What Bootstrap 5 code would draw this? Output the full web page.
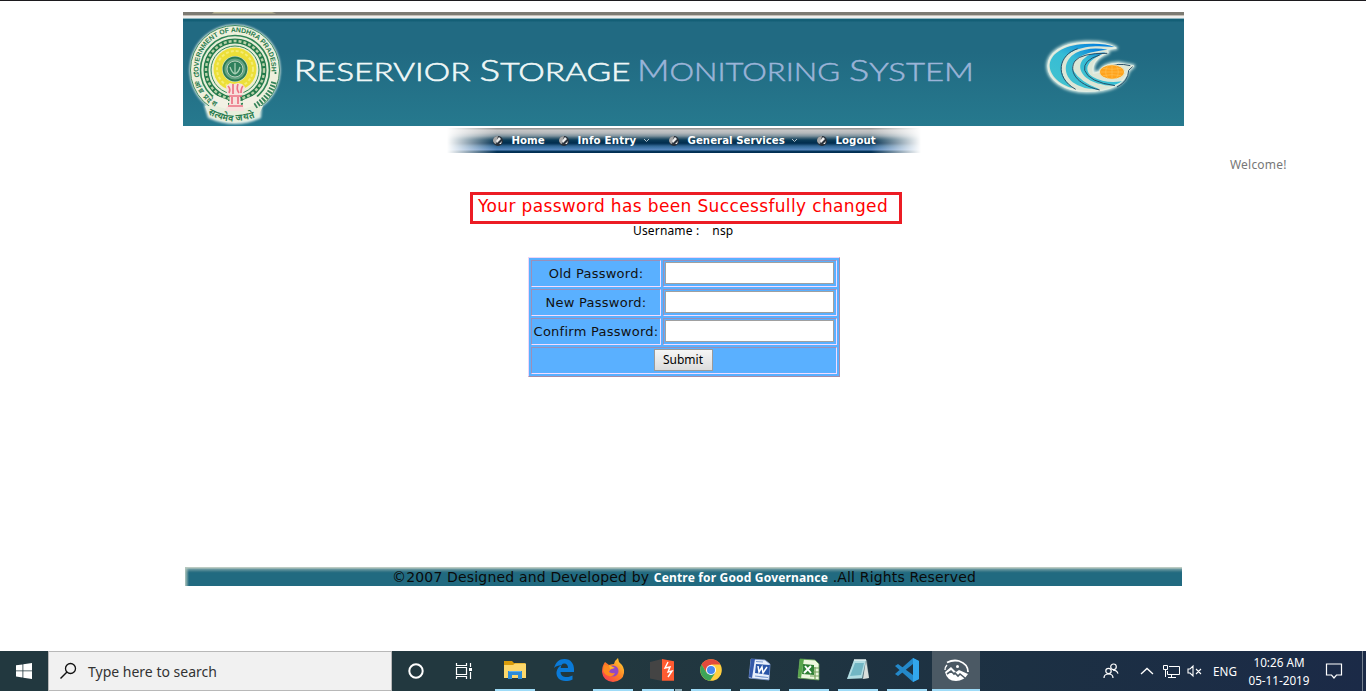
<!DOCTYPE html>
<html lang="en">
<head>
<meta charset="utf-8">
<title>Reservior Storage Monitoring System</title>
<link href="https://cdn.jsdelivr.net/npm/bootstrap@5.3.0/dist/css/bootstrap.min.css" rel="stylesheet">
<script src="https://cdn.jsdelivr.net/npm/bootstrap@5.3.0/dist/js/bootstrap.bundle.min.js" defer></script>
<style>
body{height:691px;overflow:hidden;background:#fff;color:#000;font-family:"DejaVu Sans",sans-serif;border-top:1px solid #1c1a1e}
.banner{width:1001px;height:114px;margin-top:11px;margin-left:183px;background:linear-gradient(#7c7a72 0 3px,#c5bfb6 3px 4px,#efefee 4px 6px,#8fb5be 6px 7px,#145f76 7px 9px,#216a82 10px,#216a82 40px,#26798e 100%)}
.banner svg{display:block;flex:none}
.menu-strip{width:474px;height:25px;margin:2px 0 0 447px;padding-left:44.500px;background:linear-gradient(90deg,#fff 0,#fff0 50px,#fff0 424px,#fff 100%),linear-gradient(#969696 0 1px,#c6c6c6 2px,#b5b9bc 5px,#7f939e 8px,#3e6175 10px,#0c3c58 12px,#002d4e 15px,#0d3b60 16px,#316794 18px,#4479ae 20px,#5b8ac1 22px,#07375c 23px,#002d50 25px);font:bold 10.2px/25px "DejaVu Sans",sans-serif;color:#fff}
.menu-strip a{color:#fff;text-decoration:none;white-space:nowrap;display:flex;align-items:center;height:25px;letter-spacing:.04px}
.bullet{width:12px;height:12px;margin-right:8px;margin-top:1px}
.welcome{font:12px/16px "Noto Sans",sans-serif;color:#777;margin:4px 79px 0 auto;width:57px;white-space:nowrap;letter-spacing:.2px}
.notice{width:432px;height:32px;margin:19px 0 0 470px;border:3px solid #ec1c24;color:#f00;font-size:17px;line-height:22px;padding-left:5px;white-space:nowrap;letter-spacing:.36px}
.user-line{font:12px/14px "Noto Sans",sans-serif;margin-left:633px;white-space:pre;letter-spacing:.16px}
.pw-grid{width:312px;height:120px;margin:19px 0 0 528px;background:#5ab0ff;border:1px solid;border-color:#efd5f7 #a68ca8 #a68ca8 #efd5f7;padding:2px;display:grid;grid-template-columns:130px 174px;grid-auto-rows:27px;gap:2px;font-size:13px;letter-spacing:.26px}
.pw-grid>div{border:1px solid;border-color:#9b8fb8 #f5dcff #f5dcff #9b8fb8;display:flex;align-items:center;justify-content:center;white-space:nowrap;color:#111}
.pw-grid>div:nth-child(-n+6):nth-child(even){padding-right:2px}
.pw-grid input{width:169px;height:22px;border:1px solid #a0a0a0;border-radius:0;padding:0;background:#fff;display:block;margin-bottom:1px}
.pw-grid .wide{grid-column:1/3;padding-right:2px}
.pw-grid button{width:59px;height:22px;border:1px solid #9a9a9a;background:linear-gradient(#f6f6f6,#dcdcdc);font:12px/18px "Noto Sans",sans-serif;padding:0;border-radius:0;color:#000;margin-bottom:1px}
.foot{width:997px;height:19px;margin:190px 0 0 185px;background:linear-gradient(90deg,#b4c8be 0,#226a8000 4px),linear-gradient(#bccbc2 0 1px,#6e9ba2 2px,#2b6f82 5px,#216a80 6px);font-size:14px;line-height:20px;white-space:nowrap;color:#0a0a0a;padding-left:207px;letter-spacing:.17px}
.foot b{font:bold 12px "Noto Sans",sans-serif;color:#fff}
.taskbar{height:40px;margin-top:65px;background:linear-gradient(90deg,#22383f 0,#22383f 45%,#1c3043 75%,#1b2a47 100%);font-family:"Noto Sans",sans-serif;color:#fff}
.taskbar svg{display:block;flex:none}
.search{width:344px;height:40px;background:#f1f1f1;border:1px solid #b8b8b8;font-size:14px;color:#333;padding-left:10px}
.app{width:40px;height:40px;margin-right:9px;border-bottom:2px solid transparent;display:flex;align-items:center;justify-content:center;flex:none}
.app.open{border-color:#9fdcf8}
.app.stacked{border-image:linear-gradient(90deg,#9fdcf8 0 31px,#182d35 31px 32px,#8caebb 32px) 1}
.app.current{width:48px;background:#4b5964;margin:0 0 0 -4px}
.tray{font-size:11.700px;line-height:18px;white-space:nowrap}
.clock{width:62px;text-align:center;margin-left:10px}
</style>
</head>
<body class="d-flex flex-column">
<header class="banner d-flex flex-shrink-0">
<svg width="105" height="114" viewBox="183 12 105 114">
<defs><filter id="glow" x="-20%" y="-20%" width="140%" height="140%"><feGaussianBlur stdDeviation="1.3"/></filter><filter id="halo" x="-20%" y="-20%" width="140%" height="140%"><feGaussianBlur stdDeviation="4"/></filter>
<path id="arcT" d="M199.500 77A36.500 36.500 0 1 1 270.500 77"/><path id="arcL" d="M194.500 82Q201 101 219 109"/><path id="scr" d="M208 114Q234 128 262 114"/></defs>
<path d="M212 13.500h64l-4-1.500h-58z" fill="#b8b493"/>
<g fill="#e0eee6" filter="url(#glow)"><circle cx="235" cy="70" r="45.500"/><path d="M204 105l58 1 -1 12q-26 12-53 0z"/></g>
<circle cx="235" cy="70" r="44.500" fill="#eef0dc" stroke="#408d65"/>
<path d="M205 106l58 0-5 10q-24 13-49 0z" fill="#e7eedc"/>
<circle cx="235" cy="70" r="34.500" fill="#e6eed8" stroke="#2f8455" stroke-width="1.600"/>
<circle cx="235" cy="70" r="29" fill="none" stroke="#237a4a" stroke-width="5"/><circle cx="235" cy="70" r="29" fill="none" stroke="#b8d0a8" stroke-width="2.400" stroke-dasharray="3 2"/>
<circle cx="235" cy="70" r="24" fill="#eef0d2" stroke="#37895b"/>
<circle cx="235" cy="69" r="21.500" fill="#ecdf38"/><circle cx="235" cy="69" r="18" fill="none" stroke="#f5ec75" stroke-width="2" stroke-dasharray="3 2"/>
<circle cx="235" cy="69" r="13" fill="#d7e3c7"/><circle cx="235" cy="69" r="11.500" fill="#65a383" stroke="#2b7b53" stroke-width="1.800"/>
<circle cx="235" cy="69" r="8" fill="#2f805c" stroke="#b7d0bb" stroke-width="1"/><path d="M230 67q2 6 5 7q4-2 5-7M235 63v11" stroke="#a8cfb4" fill="none" stroke-width="1.300"/>
<path d="M215 95l13 5v9q-13-2-20-9zM255 95l-12 5v9q11-2 19-9z" fill="#f2f1e4"/>
<path d="M226 86l4-3 4 1 4-1 4 1 3 3-2 7-3 2 1 9 3 3v3h-18v-3l3-3 1-9-3-2z" fill="#f7e1dd"/>
<path d="M228 86q3 3 1 7m4-9v10m5-10q-2 5 1 9m4-7q-2 2-2 7M229 96h13m-10 1v7m6-7v7M228 106h15" fill="none" stroke="#ec7284" stroke-width="1.700"/>
<g fill="#277b4d" font-family="Liberation Sans,sans-serif" font-weight="bold"><text font-size="6.800"><textPath href="#arcT" textLength="126" lengthAdjust="spacingAndGlyphs">GOVERNMENT OF ANDHRA PRADESH</textPath></text>
<text font-size="7"><textPath href="#arcL" textLength="33">आंध्र प्रदेश</textPath></text>
<text font-size="9"><textPath href="#scr" textLength="48">सत्यमेव जयते</textPath></text></g>
<path d="M274 82q-4 15-19 24" fill="none" stroke="#35835a" stroke-width="5.500" stroke-dasharray="1.800 1.500"/>
<g fill="#277b4d"><circle cx="194.500" cy="73" r="1.100"/><circle cx="275.500" cy="73" r="1.100"/></g>
</svg>
<svg width="700" height="114" viewBox="288 12 700 114" font-family="Lato,sans-serif" font-size="26" font-weight="300">
<g fill="#eef7f7" stroke="#eef7f7" stroke-width=".6"><text x="293.500" y="81" textLength="177" lengthAdjust="spacingAndGlyphs"><tspan font-size="30">R</tspan>ESERVIOR</text><text x="479.500" y="81" textLength="151" lengthAdjust="spacingAndGlyphs"><tspan font-size="30">S</tspan>TORAGE</text></g>
<g fill="#9bb4d8" stroke="#9bb4d8" stroke-width=".5"><text x="637" y="81" textLength="203" lengthAdjust="spacingAndGlyphs"><tspan font-size="30">M</tspan>ONITORING</text><text x="849" y="81" textLength="125" lengthAdjust="spacingAndGlyphs"><tspan font-size="30">S</tspan>YSTEM</text></g>
</svg>
<svg class="ms-auto" width="190" height="114" viewBox="994 12 190 114">
<g transform="translate(840 0) scale(.33333)" stroke-linejoin="round">
<defs><path id="swirl" d="M828 144Q800 126 735 128C665 130 625 160 624 198C624 238 672 274 740 274C805 274 852 256 865 212L880 198L835 190Q790 192 778 216L760 220Q750 180 804 158L800 148Z"/>
<linearGradient id="sea" x1="0" y1="1" x2=".7" y2="0"><stop offset="0" stop-color="#42c3ce"/><stop offset=".6" stop-color="#36bcd5"/><stop offset="1" stop-color="#0885dc"/></linearGradient></defs>
<use href="#swirl" fill="#d8eee8" stroke="#d8eee8" stroke-width="11" filter="url(#halo)"/>
<use href="#swirl" fill="#dce6d6" stroke="#e3eee3" stroke-width="4"/>
<g fill="url(#sea)"><path d="M824 141Q790 128 735 132C667 135 629 164 629 198C630 228 662 256 698 264Q655 226 667 188C676 157 720 139 777 139Z"/><path d="M803 149Q748 138 707 159C672 180 667 218 698 247Q730 270 778 268Q720 245 701 213C687 181 725 156 803 149Z"/><path d="M797 158Q748 156 728 179C706 209 736 243 782 252Q820 264 846 244Q796 252 759 231C728 211 740 178 797 158Z"/></g>
<path d="M707 268C640 230 657 164 713 146M779 270C705 252 686 212 705 183Q723 159 802 160M825 257Q746 246 734 211Q728 181 779 165M831 261Q865 244 866 211L878 200M808 202Q829 187 871 197" fill="none" stroke="#294f67" stroke-width="3"/>
<ellipse cx="816" cy="216" rx="38" ry="22" fill="#ffa31c" stroke="#e5e8cf" stroke-width="3"/><path d="M780 216h72M816 195v42M788 205q28 6 56 0M788 227q28-6 56 0M803 197q-12 19 0 38M829 197q12 19 0 38" fill="none" stroke="#ffbf52" stroke-width="2"/>
</g></svg>
</header>
<nav class="menu-strip d-flex flex-shrink-0">
<a href="#" style="width:66px"><svg class="bullet" viewBox="0 0 12 12"><circle cx="6" cy="6" r="5" fill="#29313a"/><path d="M1 5q1-4 5-4L4 9Q1 8 1 5" fill="#a9a9a9"/><path d="M4 6l3-4 2 2-4 4zM7 9l3-3-1 3z" fill="#eee"/></svg>Home</a>
<a href="#" style="width:110px"><svg class="bullet" viewBox="0 0 12 12"><circle cx="6" cy="6" r="5" fill="#29313a"/><path d="M1 5q1-4 5-4L4 9Q1 8 1 5" fill="#a9a9a9"/><path d="M4 6l3-4 2 2-4 4zM7 9l3-3-1 3z" fill="#eee"/></svg><span style="letter-spacing:.2px">Info Entry</span><svg style="margin-left:7px" width="7" height="5" viewBox="0 0 7 5"><path d="M1 1l2.500 2.500L6 1" fill="none" stroke="#b8c6cf"/></svg></a>
<a href="#" style="width:148px"><svg class="bullet" viewBox="0 0 12 12"><circle cx="6" cy="6" r="5" fill="#29313a"/><path d="M1 5q1-4 5-4L4 9Q1 8 1 5" fill="#a9a9a9"/><path d="M4 6l3-4 2 2-4 4zM7 9l3-3-1 3z" fill="#eee"/></svg>General Services<svg style="margin-left:6px" width="7" height="5" viewBox="0 0 7 5"><path d="M1 1l2.500 2.500L6 1" fill="none" stroke="#b8c6cf"/></svg></a>
<a href="#"><svg class="bullet" viewBox="0 0 12 12"><circle cx="6" cy="6" r="5" fill="#29313a"/><path d="M1 5q1-4 5-4L4 9Q1 8 1 5" fill="#a9a9a9"/><path d="M4 6l3-4 2 2-4 4zM7 9l3-3-1 3z" fill="#eee"/></svg>Logout</a>
</nav>
<div class="welcome flex-shrink-0">Welcome!</div>
<div class="notice flex-shrink-0">Your password has been Successfully changed</div>
<div class="user-line flex-shrink-0">Username :<span style="margin-left:13px">nsp</span></div>
<form class="pw-grid flex-shrink-0">
<div>Old Password:</div><div><input type="password" aria-label="Old"></div>
<div>New Password:</div><div><input type="password" aria-label="New"></div>
<div>Confirm Password:</div><div><input type="password" aria-label="Confirm"></div>
<div class="wide"><button type="button">Submit</button></div>
</form>
<footer class="foot flex-shrink-0">©2007 Designed and Developed by <b>Centre for Good Governance</b> .All Rights Reserved</footer>
<div class="taskbar d-flex flex-shrink-0">
<div class="d-flex align-items-center justify-content-center" style="width:48px"><svg width="16" height="16" viewBox="0 0 16 16"><path d="M0 2.300l6.500-.9v6.100H0zM7.300 1.200L16 0v7.500H7.300zM0 8.300h6.500v6.200L0 13.600zM7.300 8.300H16V16l-8.700-1.200z" fill="#fff"/></svg></div>
<div class="search d-flex align-items-center"><svg width="18" height="18" viewBox="0 0 18 18"><circle cx="11.500" cy="6.500" r="5" fill="none" stroke="#111" stroke-width="1.300"/><path d="M8 10l-6.500 6.500" stroke="#111" stroke-width="1.400"/></svg><span style="margin:1px 0 0 11px">Type here to search</span></div>
<div class="d-flex align-items-center justify-content-center" style="width:48px"><svg width="18" height="18"><circle cx="9" cy="9" r="6.700" fill="none" stroke="#fff" stroke-width="2"/></svg></div>
<div class="d-flex align-items-center justify-content-center" style="width:48px;margin-right:7px"><svg width="18" height="18" fill="none" stroke="#fff"><path d="M1.500 1v2.500h10V1M1.500 17v-2.500h10V17M1.500 5.500h10v7h-10zM15.500 1v4M15.500 10v7" stroke-width="1.200"/><path d="M14 7.500h3" stroke-width="3"/></svg></div>
<div class="app open"><svg width="22" height="20" viewBox="0 0 22 20"><path d="M0 1h8l2 2h11v5H0z" fill="#d89b0a"/><path d="M0 5h9l2-1.500h11V18H0z" fill="#fcd76b"/><path d="M4 19v-8h14v8h-4v-4H8v4z" fill="#2b8bd9"/><path d="M5 11h12v1H5z" fill="#5fb0ec"/></svg></div>
<div class="app"><svg width="20" height="22" viewBox="0 0 20 22"><path d="M0 9C2 3 5 0 10.500 0 17 0 20 5 20 10v3H6.500c.3 4 3 5 6 5 2.500 0 4.500-.6 6-1.500v4C16.500 21.500 14 22 11.500 22 5.500 22 2 18 2.500 13 3 9.500 5 7.500 7.500 6.200 5 6 2 7 0 9zM6.700 9H14c0-3-1.500-4.500-3.700-4.500C8 4.500 7 6.500 6.700 9z" fill="#0a7ad8"/></svg></div>
<div class="app open"><svg width="24" height="24" viewBox="0 0 24 24"><defs><linearGradient id="ff" x1="0" y1="1" x2="1" y2="0"><stop offset="0" stop-color="#f6305d"/><stop offset=".5" stop-color="#ff7b24"/><stop offset="1" stop-color="#ffdf35"/></linearGradient></defs><path d="M4 4l4 3q3-1 5-1 1-4 4-6l1 4q6 5 5 11-1 8-11 9Q2 23 1 14 1 8 4 4z" fill="url(#ff)"/><circle cx="12" cy="13" r="5.500" fill="#9348c3"/><path d="M3 7l6 1 4 2q-4 1-5 4 3 2 6 1-2 4-6 3-5-1-6-6z" fill="#ff8a20"/><path d="M8 7l6 3-5 1z" fill="#ffb52b"/></svg></div>
<div class="app open stacked"><svg width="24" height="22" viewBox="0 0 24 22"><path d="M0 3l12-3v22L0 19.500z" fill="#444"/><path d="M12 0l12 2.200v19.600H12z" fill="#ff5b31"/><path d="M18 3l-3 6 5-1-2 5 4-1-4 6" fill="none" stroke="#fff" stroke-width="1.400"/></svg></div>
<div class="app open"><svg width="22" height="22" viewBox="0 0 22 22"><circle cx="11" cy="11" r="10.800" fill="#ffcf3f"/><path d="M1.500 5.600A11 11 0 0 1 20.500 5.600H11L6.500 13.500z" fill="#e34a3c"/><path d="M1.500 5.600A11 11 0 0 0 10 21.800l5.500-8.300H6.500z" fill="#3da458"/><circle cx="11" cy="11" r="5" fill="#fff"/><circle cx="11" cy="11" r="4" fill="#4688ef"/></svg></div>
<div class="app open"><svg width="24" height="24" viewBox="0 0 24 24"><path d="M3 1l14 1 5 4-1 16L1 20z" fill="#e8effc" stroke="#7c98ce" stroke-width=".8"/><path d="M3 1l4 0-3 19-3-1z" fill="#3458a9"/><path d="M8 6l14 1-1 10L7 15z" fill="#2a55a8"/><path d="M10 8l1 6 3-5 1 6 4-6" fill="none" stroke="#fff" stroke-width="1.500"/><path d="M7 18l13 1.500M8 3.500l7 .5" stroke="#7b9bd2" stroke-width="1.200"/></svg></div>
<div class="app open"><svg width="24" height="24" viewBox="0 0 24 24"><path d="M3 1l15 1 4 4v16L1 20z" fill="#edf7df" stroke="#5d9b50" stroke-width=".8"/><path d="M3 1h4L4 20l-3-1z" fill="#58a54b"/><path d="M6 6l11 1v10L5 16z" fill="#2f8035"/><path d="M8 8l6 7M14 8l-7 7" stroke="#fff" stroke-width="1.900"/><path d="M17 10h5M16 14h6M13 18h9M18 9v12" stroke="#73a25a" stroke-width="1.200"/></svg></div>
<div class="app open"><svg width="24" height="22" viewBox="0 0 24 22"><path d="M8 1h13l2 18-6 1H1z" fill="#526f79"/><path d="M8 1h12l-4 18-15 1z" fill="#b1dce2"/><path d="M9 4h9l-3 12-11 1z" fill="#72b6c4"/><path d="M20 1l3 18-6 1z" fill="#d9dfdc"/><path d="M8 1h12" stroke="#e5f2f2" stroke-width="1.500"/></svg></div>
<div class="app open"><svg width="24" height="24" viewBox="0 0 24 24"><path d="M18 0l6 3v18l-6 3L0 8l3-2 15 11V6L3 18l-3-2z" fill="#2489ca"/><path d="M18 0l6 3v18l-6 3z" fill="#32a7ed"/></svg></div>
<div class="app open current"><svg width="25" height="23" viewBox="0 0 25 23" fill="none" stroke="#fff"><path d="M3 3.500Q9 .5 15 2q9 3 9 11" stroke-width="1.800"/><path d="M1 11q0-3 2-5" stroke-width="1.400"/><path d="M1 13l6-5 5 5 3-2 9 4q-4 7-12 7Q3 22 1 13z" fill="#fff" stroke="none"/><path d="M3 15l4-3 3 3 1-1 3 3 2-2 5 4" stroke="#4b5964" stroke-width="1.600"/><circle cx="13.500" cy="7.500" r="1.500" fill="#fff" stroke="none"/></svg></div>
<div class="tray ms-auto d-flex align-items-center">
<svg width="16" height="16" viewBox="0 0 16 16" fill="none" stroke="#fff" stroke-width="1.200"><circle cx="5.500" cy="8" r="2.700"/><path d="M1 15q0-4 4.500-4T10 15"/><circle cx="10.500" cy="3.800" r="2.800"/><path d="M10 7.200q4 0 5 3.500"/></svg>
<svg style="margin-left:21px" width="14" height="8"><path d="M1 7l6-5.500L13 7" fill="none" stroke="#fff" stroke-width="1.300"/></svg>
<svg style="margin-left:9px" width="17" height="15" fill="none" stroke="#fff"><path d="M6 2.500h10.500v8H4.500V7M8.500 11v3M5 13.500h8M.5 1.500h4v4h-4zM2.500 6v7"/></svg>
<svg style="margin-left:7px" width="15" height="14" fill="none" stroke="#fff"><path d="M1 5h2l3-3v10L3 9H1zM9 5l5 5M14 5l-5 5" stroke-width="1.100"/></svg>
<span style="margin-left:11px;width:25px">ENG</span>
<div class="clock"><div>10:26 AM</div><div>05-11-2019</div></div>
<svg style="margin:0 19px 0 15px" width="18" height="18" fill="none" stroke="#fff" stroke-width="1.200"><path d="M1.500 2h15v11h-5L9 16l-2.500-3h-5z"/></svg>
<span style="width:1px;height:40px;background:#75808e;margin-right:3px"></span>
</div>
</div>
</body>
</html>
